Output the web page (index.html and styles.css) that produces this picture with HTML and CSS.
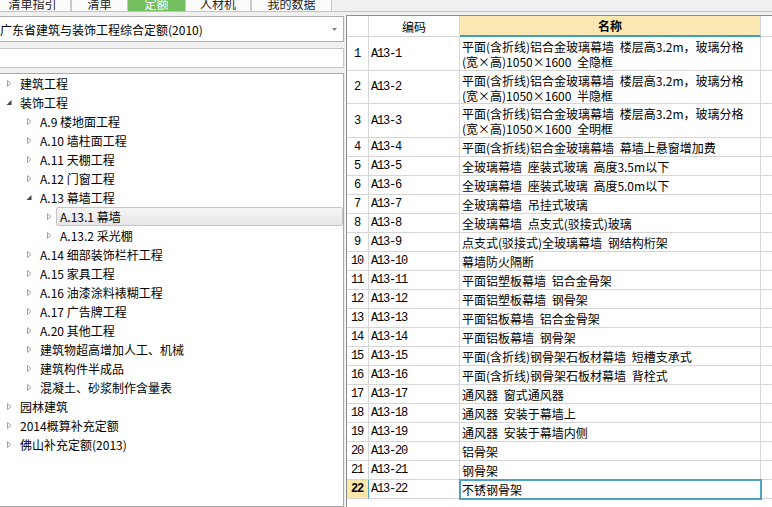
FILE: index.html
```html
<!DOCTYPE html>
<html lang="zh-CN">
<head>
<meta charset="utf-8">
<title>定额查询</title>
<link rel="stylesheet" href="styles.css">
</head>
<body>
<div class="tabbar">
  <div class="tab t1">清单指引</div>
  <div class="tab t2">清单</div>
  <div class="tab t3 active">定额</div>
  <div class="tab t4">人材机</div>
  <div class="tab t5">我的数据</div>
</div>
<div class="main">
  <div class="left">
    <div class="combo">
      <span>广东省建筑与装饰工程综合定额(2010)</span>
      <svg class="drop" width="5" height="3" viewBox="0 0 5 3"><path d="M0 0H5L2.5 3Z" fill="#808080"/></svg>
    </div>
    <div class="search"></div>
    <div class="tree">
      <div class="node l0"><svg class="arr" width="6" height="9" viewBox="0 0 6 9"><path d="M1.5 1.5L5 4.5L1.5 7.5Z" fill="none" stroke="#a3a3a3"/></svg><span class="lbl">建筑工程</span></div>
      <div class="node l0"><svg class="arr" width="6" height="9" viewBox="0 0 6 9"><path d="M5.5 2V7H0.5Z" fill="#454545"/></svg><span class="lbl">装饰工程</span></div>
      <div class="node l1"><svg class="arr" width="6" height="9" viewBox="0 0 6 9"><path d="M1.5 1.5L5 4.5L1.5 7.5Z" fill="none" stroke="#a3a3a3"/></svg><span class="lbl">A.9 楼地面工程</span></div>
      <div class="node l1"><svg class="arr" width="6" height="9" viewBox="0 0 6 9"><path d="M1.5 1.5L5 4.5L1.5 7.5Z" fill="none" stroke="#a3a3a3"/></svg><span class="lbl">A.10 墙柱面工程</span></div>
      <div class="node l1"><svg class="arr" width="6" height="9" viewBox="0 0 6 9"><path d="M1.5 1.5L5 4.5L1.5 7.5Z" fill="none" stroke="#a3a3a3"/></svg><span class="lbl">A.11 天棚工程</span></div>
      <div class="node l1"><svg class="arr" width="6" height="9" viewBox="0 0 6 9"><path d="M1.5 1.5L5 4.5L1.5 7.5Z" fill="none" stroke="#a3a3a3"/></svg><span class="lbl">A.12 门窗工程</span></div>
      <div class="node l1"><svg class="arr" width="6" height="9" viewBox="0 0 6 9"><path d="M5.5 2V7H0.5Z" fill="#454545"/></svg><span class="lbl">A.13 幕墙工程</span></div>
      <div class="node l2 selected"><svg class="arr" width="6" height="9" viewBox="0 0 6 9"><path d="M1.5 1.5L5 4.5L1.5 7.5Z" fill="none" stroke="#a3a3a3"/></svg><span class="lbl">A.13.1 幕墙</span></div>
      <div class="node l2"><svg class="arr" width="6" height="9" viewBox="0 0 6 9"><path d="M1.5 1.5L5 4.5L1.5 7.5Z" fill="none" stroke="#a3a3a3"/></svg><span class="lbl">A.13.2 采光棚</span></div>
      <div class="node l1"><svg class="arr" width="6" height="9" viewBox="0 0 6 9"><path d="M1.5 1.5L5 4.5L1.5 7.5Z" fill="none" stroke="#a3a3a3"/></svg><span class="lbl">A.14 细部装饰栏杆工程</span></div>
      <div class="node l1"><svg class="arr" width="6" height="9" viewBox="0 0 6 9"><path d="M1.5 1.5L5 4.5L1.5 7.5Z" fill="none" stroke="#a3a3a3"/></svg><span class="lbl">A.15 家具工程</span></div>
      <div class="node l1"><svg class="arr" width="6" height="9" viewBox="0 0 6 9"><path d="M1.5 1.5L5 4.5L1.5 7.5Z" fill="none" stroke="#a3a3a3"/></svg><span class="lbl">A.16 油漆涂料裱糊工程</span></div>
      <div class="node l1"><svg class="arr" width="6" height="9" viewBox="0 0 6 9"><path d="M1.5 1.5L5 4.5L1.5 7.5Z" fill="none" stroke="#a3a3a3"/></svg><span class="lbl">A.17 广告牌工程</span></div>
      <div class="node l1"><svg class="arr" width="6" height="9" viewBox="0 0 6 9"><path d="M1.5 1.5L5 4.5L1.5 7.5Z" fill="none" stroke="#a3a3a3"/></svg><span class="lbl">A.20 其他工程</span></div>
      <div class="node l1"><svg class="arr" width="6" height="9" viewBox="0 0 6 9"><path d="M1.5 1.5L5 4.5L1.5 7.5Z" fill="none" stroke="#a3a3a3"/></svg><span class="lbl">建筑物超高增加人工、机械</span></div>
      <div class="node l1"><svg class="arr" width="6" height="9" viewBox="0 0 6 9"><path d="M1.5 1.5L5 4.5L1.5 7.5Z" fill="none" stroke="#a3a3a3"/></svg><span class="lbl">建筑构件半成品</span></div>
      <div class="node l1"><svg class="arr" width="6" height="9" viewBox="0 0 6 9"><path d="M1.5 1.5L5 4.5L1.5 7.5Z" fill="none" stroke="#a3a3a3"/></svg><span class="lbl">混凝土、砂浆制作含量表</span></div>
      <div class="node l0"><svg class="arr" width="6" height="9" viewBox="0 0 6 9"><path d="M1.5 1.5L5 4.5L1.5 7.5Z" fill="none" stroke="#a3a3a3"/></svg><span class="lbl">园林建筑</span></div>
      <div class="node l0"><svg class="arr" width="6" height="9" viewBox="0 0 6 9"><path d="M1.5 1.5L5 4.5L1.5 7.5Z" fill="none" stroke="#a3a3a3"/></svg><span class="lbl">2014概算补充定额</span></div>
      <div class="node l0"><svg class="arr" width="6" height="9" viewBox="0 0 6 9"><path d="M1.5 1.5L5 4.5L1.5 7.5Z" fill="none" stroke="#a3a3a3"/></svg><span class="lbl">佛山补充定额(2013)</span></div>
    </div>
  </div>
  <div class="right">
    <div class="row head">
      <div class="c num"></div><div class="c code">编码</div><div class="c name">名称</div><div class="c rest"></div>
    </div>
    <div class="row tall h34">
      <div class="c num">1</div><div class="c code">A13-1</div><div class="c name"><div>平面(含折线)铝合金玻璃幕墙 楼层高3.2m，玻璃分格<br>(宽×高)1050×1600 全隐框</div></div><div class="c rest"></div>
    </div>
    <div class="row tall h33">
      <div class="c num">2</div><div class="c code">A13-2</div><div class="c name"><div>平面(含折线)铝合金玻璃幕墙 楼层高3.2m，玻璃分格<br>(宽×高)1050×1600 半隐框</div></div><div class="c rest"></div>
    </div>
    <div class="row tall h34">
      <div class="c num">3</div><div class="c code">A13-3</div><div class="c name"><div>平面(含折线)铝合金玻璃幕墙 楼层高3.2m，玻璃分格<br>(宽×高)1050×1600 全明框</div></div><div class="c rest"></div>
    </div>
    <div class="row"><div class="c num">4</div><div class="c code">A13-4</div><div class="c name">平面(含折线)铝合金玻璃幕墙 幕墙上悬窗增加费</div><div class="c rest"></div></div>
    <div class="row"><div class="c num">5</div><div class="c code">A13-5</div><div class="c name">全玻璃幕墙 座装式玻璃 高度3.5m以下</div><div class="c rest"></div></div>
    <div class="row"><div class="c num">6</div><div class="c code">A13-6</div><div class="c name">全玻璃幕墙 座装式玻璃 高度5.0m以下</div><div class="c rest"></div></div>
    <div class="row"><div class="c num">7</div><div class="c code">A13-7</div><div class="c name">全玻璃幕墙 吊挂式玻璃</div><div class="c rest"></div></div>
    <div class="row"><div class="c num">8</div><div class="c code">A13-8</div><div class="c name">全玻璃幕墙 点支式(驳接式)玻璃</div><div class="c rest"></div></div>
    <div class="row"><div class="c num">9</div><div class="c code">A13-9</div><div class="c name">点支式(驳接式)全玻璃幕墙 钢结构桁架</div><div class="c rest"></div></div>
    <div class="row"><div class="c num">10</div><div class="c code">A13-10</div><div class="c name">幕墙防火隔断</div><div class="c rest"></div></div>
    <div class="row"><div class="c num">11</div><div class="c code">A13-11</div><div class="c name">平面铝塑板幕墙 铝合金骨架</div><div class="c rest"></div></div>
    <div class="row"><div class="c num">12</div><div class="c code">A13-12</div><div class="c name">平面铝塑板幕墙 钢骨架</div><div class="c rest"></div></div>
    <div class="row"><div class="c num">13</div><div class="c code">A13-13</div><div class="c name">平面铝板幕墙 铝合金骨架</div><div class="c rest"></div></div>
    <div class="row"><div class="c num">14</div><div class="c code">A13-14</div><div class="c name">平面铝板幕墙 钢骨架</div><div class="c rest"></div></div>
    <div class="row"><div class="c num">15</div><div class="c code">A13-15</div><div class="c name">平面(含折线)钢骨架石板材幕墙 短槽支承式</div><div class="c rest"></div></div>
    <div class="row"><div class="c num">16</div><div class="c code">A13-16</div><div class="c name">平面(含折线)钢骨架石板材幕墙 背栓式</div><div class="c rest"></div></div>
    <div class="row"><div class="c num">17</div><div class="c code">A13-17</div><div class="c name">通风器 窗式通风器</div><div class="c rest"></div></div>
    <div class="row"><div class="c num">18</div><div class="c code">A13-18</div><div class="c name">通风器 安装于幕墙上</div><div class="c rest"></div></div>
    <div class="row"><div class="c num">19</div><div class="c code">A13-19</div><div class="c name">通风器 安装于幕墙内侧</div><div class="c rest"></div></div>
    <div class="row"><div class="c num">20</div><div class="c code">A13-20</div><div class="c name">铝骨架</div><div class="c rest"></div></div>
    <div class="row"><div class="c num">21</div><div class="c code">A13-21</div><div class="c name">钢骨架</div><div class="c rest"></div></div>
    <div class="row current"><div class="c num">22</div><div class="c code">A13-22</div><div class="c name">不锈钢骨架</div><div class="c rest"></div></div>
  </div>
</div>
</body>
</html>
```

FILE: styles.css
```css
html, body {
  margin: 0;
  padding: 0;
  height: 100%;
  overflow: hidden;
}
body {
  background: #f0f0f0;
  font-family: "Noto Sans CJK SC", sans-serif;
  font-size: 12px;
  color: #000;
}

/* tab strip (cut at top) */
.tabbar {
  height: 11px;
  border-bottom: 1px solid #b3cfa4;
  display: flex;
  align-items: flex-end;
  overflow: hidden;
  padding-left: 0;
}
.tab {
  flex: none;
  box-sizing: border-box;
  height: 15px;
  line-height: 14px;
  text-align: center;
  background: #fbfbfb;
  border: 1px solid #c9c9c9;
  border-bottom: none;
  color: #222;
}
.t1 { width: 77px; margin-left: -6px; }
.t2 { width: 57px; }
.t3 { width: 57px; }
.t4 { width: 66px; }
.t5 { width: 81px; }
.tab.active {
  background: #74be60;
  border-color: #74be60;
  color: #fff;
}

.main {
  display: flex;
  align-items: flex-start;
  height: calc(100% - 12px);
}

/* left column */
.left {
  flex: none;
  width: 346px;
  margin-left: -2px;
  height: 100%;
  display: flex;
  flex-direction: column;
}
.combo {
  margin-top: 4px;
  height: 26px;
  box-sizing: border-box;
  border: 1px solid #adadad;
  background: #fff;
  display: flex;
  align-items: center;
  justify-content: space-between;
  padding: 0 6px 0 1px;
}
.drop { display: block; }
.search {
  margin-top: 6px;
  height: 20px;
  box-sizing: border-box;
  border: 1px solid #c8c8c8;
  background: #fff;
}
.tree {
  margin-top: 5px;
  flex: 1;
  border: 1px solid #a8a8a8;
  background: #fff;
}
.node {
  height: 19px;
  display: flex;
  align-items: center;
  white-space: nowrap;
}
.node.l0 { padding-left: 7px; }
.node.l1 { padding-left: 27px; }
.node.l2 { padding-left: 47px; }
.arr {
  flex: none;
  display: block;
  margin-right: 8px;
}
.lbl {
  line-height: 19px;
}
.node.selected .lbl {
  flex: 1;
  box-sizing: border-box;
  height: 19px;
  line-height: 17px;
  margin-left: -4px;
  padding-left: 3px;
  border: 1px solid #c6c6c6;
  border-radius: 2px;
  background: linear-gradient(#f6f6f6, #e6e6e6);
}

/* right grid */
.right {
  flex: 1;
  margin-left: 2px;
  margin-top: 3px;
  height: calc(100% - 3px);
  border-top: 1px solid #8e8e8e;
  border-left: 1px solid #8e8e8e;
  background: #fff;
  overflow: hidden;
}
.row {
  display: flex;
  height: 19px;
}
.row.head { height: 21px; }
.row.h34 { height: 34px; }
.row.h33 { height: 33px; }
.c {
  flex: none;
  box-sizing: border-box;
  height: 100%;
  border-right: 1px solid #d6d6d6;
  border-bottom: 1px solid #d6d6d6;
  display: flex;
  align-items: center;
  white-space: nowrap;
  overflow: hidden;
}
.num {
  width: 22px;
  justify-content: center;
  font-family: "Liberation Mono", monospace;
  letter-spacing: -1.2px;
  padding-right: 1px;
}
.code {
  width: 91px;
  padding-left: 2px;
  font-family: "Liberation Mono", monospace;
  letter-spacing: -1.2px;
}
.name {
  width: 301px;
  padding-left: 2px;
  word-spacing: 3px;
}
.rest {
  flex: 1;
  border-right: none;
}
.row.tall .name {
  align-items: flex-start;
  padding-top: 2px;
  line-height: 15px;
}
.row.head .code {
  justify-content: center;
  font-family: "Noto Sans CJK SC", sans-serif;
  letter-spacing: 0;
  padding-left: 0;
}
.row.head .name {
  justify-content: center;
  font-weight: bold;
  background: #fce8b3;
  border-bottom: 2px solid #3f9dc9;
  padding-left: 0;
}
.row.current .num {
  background: #fde7a8;
  font-weight: bold;
  border-right-color: #4ea3c3;
}
.row.current .name {
  position: relative;
  z-index: 1;
  outline: 2px solid #4ea3c3;
  outline-offset: -1px;
}
```
